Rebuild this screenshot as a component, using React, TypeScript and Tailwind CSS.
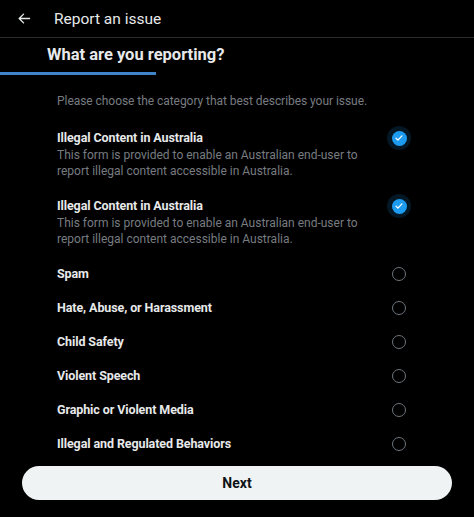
import React from "react";

type Option = { title: string; description?: string; checked: boolean };

const options: Option[] = [
  {
    title: "Illegal Content in Australia",
    description:
      "This form is provided to enable an Australian end-user to report illegal content accessible in Australia.",
    checked: true,
  },
  {
    title: "Illegal Content in Australia",
    description:
      "This form is provided to enable an Australian end-user to report illegal content accessible in Australia.",
    checked: true,
  },
  { title: "Spam", checked: false },
  { title: "Hate, Abuse, or Harassment", checked: false },
  { title: "Child Safety", checked: false },
  { title: "Violent Speech", checked: false },
  { title: "Graphic or Violent Media", checked: false },
  { title: "Illegal and Regulated Behaviors", checked: false },
];

function CheckMark({ checked }: { checked: boolean }) {
  if (checked) {
    return (
      <div className="flex h-[24px] w-[24px] shrink-0 items-center justify-center rounded-full bg-[#1d9bf0]/15">
        <div className="flex h-[15px] w-[15px] items-center justify-center rounded-full bg-[#1d9bf0]">
          <svg viewBox="0 0 24 24" className="h-[10px] w-[10px]" fill="none">
            <path d="M5 12.5l4.5 4.5L19 7" stroke="white" strokeWidth="3" strokeLinecap="round" strokeLinejoin="round" />
          </svg>
        </div>
      </div>
    );
  }
  return (
    <div className="flex h-[24px] w-[24px] shrink-0 items-center justify-center">
      <div className="h-[14px] w-[14px] rounded-full border-[1.5px] border-[#6e767d]" />
    </div>
  );
}

export default function App() {
  return (
    <div
      className="min-h-[517px] w-[474px] bg-black text-[#e7e9ea]"
      style={{ fontFamily: "Roboto, 'Noto Sans', sans-serif" }}
    >
      {/* top bar */}
      <div className="flex h-[38px] items-center border-b border-[#2a2d30] pl-[17px]">
        <svg viewBox="0 0 24 24" className="h-[15px] w-[15px]" fill="none">
          <path d="M20 12H4M10.5 5L3.5 12l7 7" stroke="#e7e9ea" strokeWidth="2.2" strokeLinecap="round" strokeLinejoin="round" />
        </svg>
        <span className="ml-[22px] text-[15.5px] leading-[20px]">Report an issue</span>
      </div>

      {/* step heading */}
      <div className="flex h-[34px] items-center pl-[47px]">
        <h1 className="text-[16.5px] font-bold leading-[22px]">What are you reporting?</h1>
      </div>
      <div className="h-[3px] w-[156px] bg-[#3f83c9]" />

      <p className="mt-[18px] pl-[57px] text-[12px] leading-[16px] tracking-[-0.05px] text-[#777c81]">
        Please choose the category that best describes your issue.
      </p>

      <div className="mt-[12px] flex flex-col pl-[57px] pr-[63px]">
        {options.map((o, i) => (
          <div
            key={i}
            className={`flex items-start justify-between pt-[7px] ${o.description ? "pb-[10px]" : "pb-[7px]"}`}
          >
            <div className="flex flex-col">
              <span className="text-[12.5px] font-bold leading-[20px] tracking-[-0.1px]">{o.title}</span>
              {o.description && (
                <span className="w-[320px] text-[12px] leading-[15.5px] text-[#777c81]">{o.description}</span>
              )}
            </div>
            <div className="flex h-[20px] items-center">
              <CheckMark checked={o.checked} />
            </div>
          </div>
        ))}
      </div>

      <div className="mt-[5px] px-[22px]">
        <button className="flex h-[34px] w-full items-center justify-center rounded-full bg-[#eff3f4] text-[14px] font-bold text-[#0f1419]">
          Next
        </button>
      </div>
    </div>
  );
}
